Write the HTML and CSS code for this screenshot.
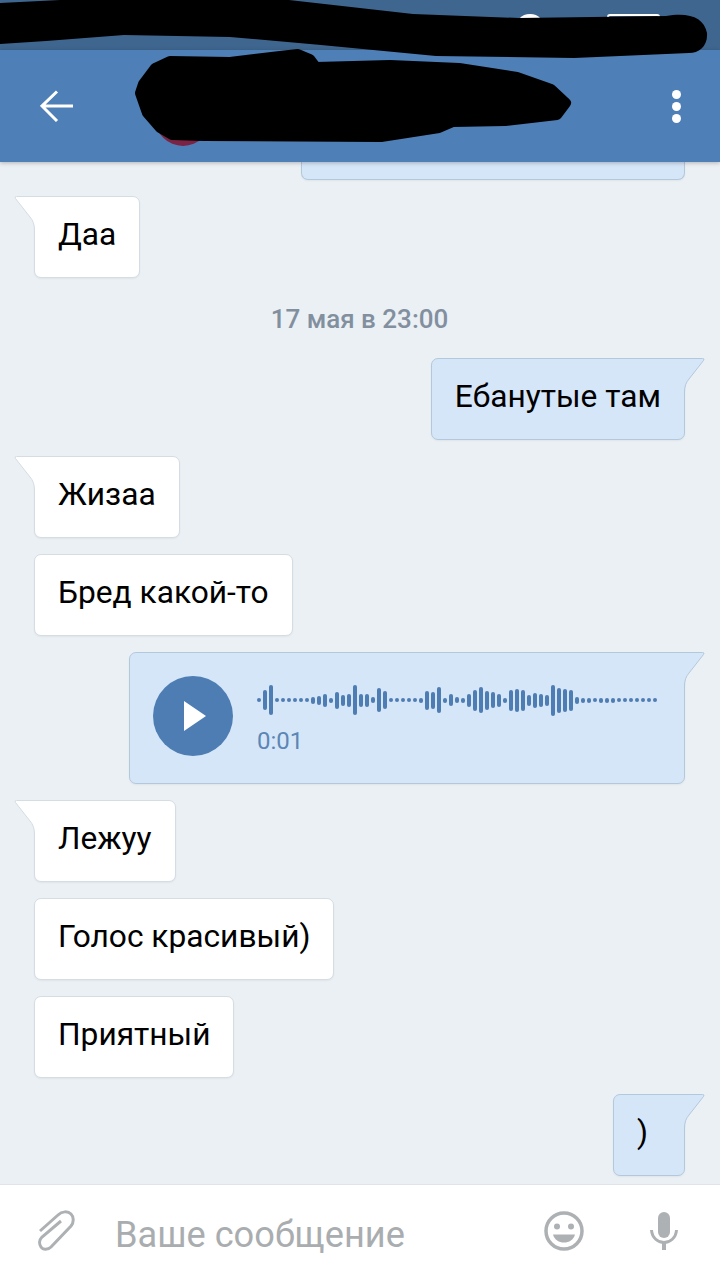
FILE: index.html
```html
<!DOCTYPE html>
<html lang="ru">
<head>
    <meta charset="UTF-8">
    <meta name="viewport" content="width=device-width, initial-scale=1.0">
    <title>Сообщения</title>
    <link rel="stylesheet" href="styles.css">
</head>
<body>
    <svg class="sprite" width="0" height="0">
        <symbol id="tail" viewBox="0 0 22 36">
            <path d="M0 .5H18.5Q21 .5 19.500 2.500L5 21Q.5 26 .5 34V36H0Z" stroke="none"/>
            <path d="M0 .5H18.5Q21 .5 19.500 2.500L5 21Q.5 26 .5 34V36" fill="none"/>
        </symbol>
    </svg>

    <div class="status-bar">
        <span class="status-round"></span>
        <span class="status-battery"></span>
    </div>

    <header class="top-bar">
        <svg class="back" width="34" height="32" viewBox="0 0 34 32">
            <path d="M33 16H3M17 1.500 2 16l15 15" fill="none" stroke="#fff" stroke-width="3"/>
        </svg>
        <div class="avatar"></div>
        <div class="more"><i></i><i></i><i></i></div>
    </header>

    <main class="messages">
        <div class="bubble out clipped"></div>
        <div class="bubble in tailed">Даа<svg class="tail"><use href="#tail"/></svg></div>
        <div class="date">17 мая в 23:00</div>
        <div class="bubble out tailed">Ебанутые там<svg class="tail"><use href="#tail"/></svg></div>
        <div class="bubble in tailed">Жизаа<svg class="tail"><use href="#tail"/></svg></div>
        <div class="bubble in">Бред какой-то</div>
        <div class="bubble out tailed voice">
            <div class="play">
                <svg width="24" height="30" viewBox="0 0 24 30"><path d="M1 0 23 15 1 30Z" fill="#fff"/></svg>
            </div>
            <div class="voice-body">
                <div class="wave" id="wave"></div>
                <div class="voice-time">0:01</div>
            </div>
            <svg class="tail"><use href="#tail"/></svg>
        </div>
        <div class="bubble in tailed">Лежуу<svg class="tail"><use href="#tail"/></svg></div>
        <div class="bubble in">Голос красивый)</div>
        <div class="bubble in">Приятный</div>
        <div class="bubble out tailed short">)<svg class="tail"><use href="#tail"/></svg></div>
    </main>

    <footer class="composer">
        <svg class="clip" width="38" height="42" viewBox="0 0 38 42">
            <path d="M2 21 20 5C24 1 30 1 33 4 36 7 36 12 33 16L13 37C10 40 5 40 3 37 1 34 1 30 4 27L23 11" fill="none" stroke="#adb1b3" stroke-width="3"/>
        </svg>
        <div class="placeholder">Ваше сообщение</div>
        <svg class="smile" width="40" height="40" viewBox="0 0 40 40">
            <circle cx="20" cy="20" r="18" fill="none" stroke="#adb1b3" stroke-width="3.500"/>
            <circle cx="13" cy="15.500" r="3" fill="#adb1b3"/>
            <circle cx="27" cy="15.500" r="3" fill="#adb1b3"/>
            <path d="M9 23.500H31C29.500 29 25 31.500 20 31.500S10.500 29 9 23.500Z" fill="#adb1b3"/>
        </svg>
        <svg class="mic" width="28" height="38" viewBox="0 0 28 38">
            <rect x="8" y="0" width="12" height="26" rx="6" fill="#adb1b3"/>
            <path d="M1.500 18C2 26 8 30.500 14 30.500S26 26 26.500 18" fill="none" stroke="#adb1b3" stroke-width="3"/>
            <path d="M14 30V38" fill="none" stroke="#adb1b3" stroke-width="4"/>
        </svg>
    </footer>

    <svg class="scribble" width="720" height="150" viewBox="0 0 720 150">
        <path d="M0 3 60 0H289L413 14 519 18 666 16C690 12 704 18 707 33 708 46 699 53 689 53L574 58 436 56 321 45 230 37 124 35 46 41 0 44Z"/>
        <path class="blob" d="M155 68 170 61 230 62 280 56 298 54 310 59 316 67 390 65 459 68 517 77 551 89 566 103 557 115 505 121 453 122 439 128 381 137 204 136 172 135 160 128 147 113 140 93 143 84Z"/>
    </svg>

    <script src="app.js"></script>
</body>
</html>
```

FILE: styles.css
```css
* {
    box-sizing: border-box;
}
body {
    font-family: Roboto, sans-serif;
    margin: 0;
    width: 720px;
    height: 1280px;
    display: flex;
    flex-direction: column;
    position: relative;
    overflow: hidden;
    background-color: #ebf0f5;
}
.sprite {
    position: absolute;
}
.status-bar {
    height: 50px;
    flex-shrink: 0;
    display: flex;
    align-items: flex-start;
    background-color: #3f668f;
    padding: 14px 60px 0 515px;
}
.status-round {
    width: 30px;
    height: 30px;
    border-radius: 50%;
    background-color: white;
}
.status-battery {
    width: 54px;
    height: 20px;
    margin-left: 62px;
    border-radius: 3px;
    border: 2px solid white;
}
.top-bar {
    height: 112px;
    flex-shrink: 0;
    display: flex;
    align-items: center;
    padding: 0 40px;
    background-color: #4e7fb6;
    box-shadow: 0 1px 4px rgba(0,0,0,0.25);
    z-index: 1;
}
.avatar {
    width: 56px;
    height: 56px;
    margin: 24px 0 0 81px;
    border-radius: 50%;
    background-color: #7a2345;
}
.more {
    margin-left: auto;
    margin-right: -1px;
    display: flex;
    flex-direction: column;
    gap: 3px;
}
.more i {
    width: 9px;
    height: 9px;
    border-radius: 50%;
    background-color: white;
}
.messages {
    flex: 1;
    min-height: 0;
    display: flex;
    flex-direction: column;
    align-items: flex-start;
    gap: 16px;
    padding: 0 35px 0 34px;
}
.bubble {
    position: relative;
    height: 82px;
    padding: 0 23px 5px;
    display: flex;
    align-items: center;
    flex-shrink: 0;
    font-size: 31.7px;
    color: black;
    border-radius: 7px;
    border: 1px solid;
    box-shadow: 0 1px 2px rgba(0,0,0,0.05);
}
.bubble.in {
    background-color: white;
    border-color: #d5dce4;
}
.bubble.out {
    align-self: flex-end;
    background-color: #d5e6f8;
    border-color: #b4c8dd;
}
.bubble.clipped {
    width: 384px;
    height: 18px;
    border-top: none;
    border-radius: 0 0 7px 7px;
}
.bubble.short {
    width: 72px;
}
.in.tailed {
    border-top-left-radius: 0;
}
.out.tailed {
    border-top-right-radius: 0;
}
.tail {
    position: absolute;
    top: -1px;
    width: 22px;
    height: 36px;
    stroke-width: 1;
}
.out .tail {
    right: -22px;
    fill: #d5e6f8;
    stroke: #b4c8dd;
}
.in .tail {
    left: -22px;
    transform: scaleX(-1);
    fill: white;
    stroke: #d5dce4;
}
.date {
    height: 48px;
    padding-top: 2px;
    align-self: center;
    display: flex;
    align-items: center;
    font-size: 26px;
    font-weight: 500;
    color: #828f9e;
}
.bubble.voice {
    width: 556px;
    height: 132px;
    padding-bottom: 0;
    gap: 24px;
}
.play {
    width: 80px;
    height: 80px;
    flex-shrink: 0;
    margin-bottom: 4px;
    border-radius: 50%;
    background-color: #4d7db3;
    display: flex;
    align-items: center;
    justify-content: center;
    padding-left: 4px;
}
.voice-body {
    flex: 1;
    align-self: flex-start;
    padding-top: 31px;
}
.wave {
    height: 32px;
    display: flex;
    align-items: center;
    gap: 2px;
}
.wave span {
    width: 4px;
    border-radius: 2px;
    background-color: #4d7db3;
    flex-shrink: 0;
}
.voice-time {
    margin-top: 11px;
    font-size: 24px;
    color: #5c86b5;
}
.composer {
    height: 96px;
    flex-shrink: 0;
    display: flex;
    align-items: center;
    background-color: white;
    border-top: 1px solid #dfe4e9;
    padding: 0 42px 0 38px;
}
.clip {
    margin-top: -4px;
}
.placeholder {
    flex: 1;
    margin: 3px 0 0 39px;
    font-size: 36.2px;
    color: #a9adb0;
}
.smile {
    margin-top: -4px;
}
.mic {
    margin: -4px 0 0 66px;
}
.scribble {
    position: absolute;
    top: 0;
    left: 0;
    z-index: 2;
}
.blob {
    stroke: black;
    stroke-width: 10;
    stroke-linejoin: round;
}
```

FILE: app.js
```js
// alturas de las barras de la onda, una cada 6px
const heights = [
    4, 20, 30, 4, 4, 4, 4, 4, 4, 7, 9, 13, 5, 17, 11, 13, 30, 13, 13, 6, 24, 18,
    4, 4, 4, 4, 4, 5, 19, 17, 26, 5, 12, 6, 5, 13, 21, 26, 19, 16, 13, 5, 21, 23,
    21, 11, 15, 13, 11, 31, 25, 23, 21, 7, 5, 5, 4, 5, 5, 5, 4, 4, 4, 4, 4, 4, 4
];
const wave = document.getElementById('wave');
heights.forEach(h => {
    const bar = document.createElement('span');
    bar.style.height = h + 'px';
    wave.appendChild(bar);
});
```
